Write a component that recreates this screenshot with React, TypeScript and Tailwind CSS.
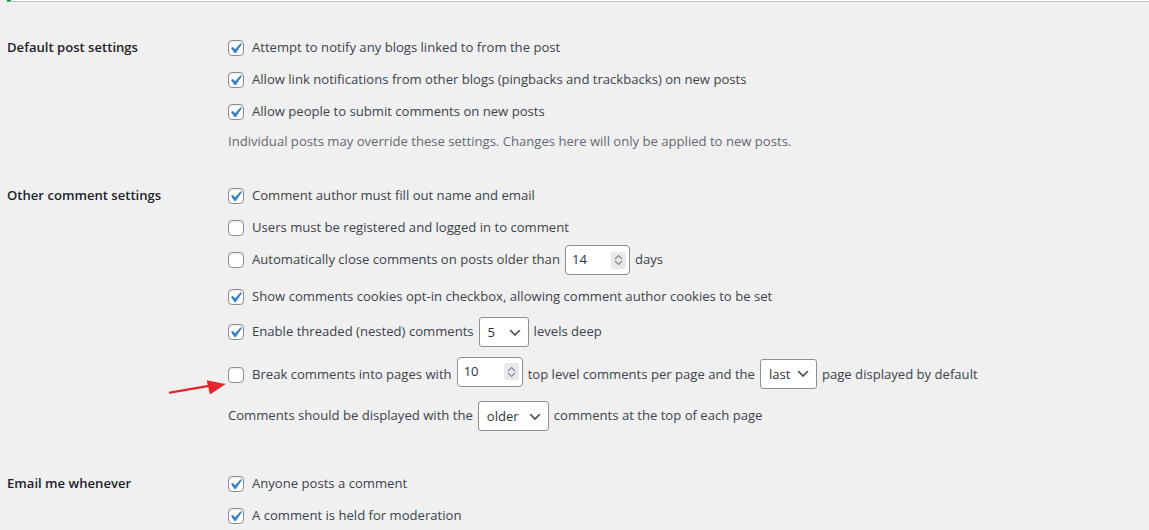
import type { ReactNode } from "react";

const font = { fontFamily: '"Open Sans", "Noto Sans", sans-serif' };

function Check({ on }: { on?: boolean }) {
  return (
    <span className="relative inline-block w-4 h-4 shrink-0 rounded-[4px] border border-[#8c8f94] bg-white shadow-[inset_0_1px_2px_rgba(0,0,0,0.1)]">
      {on && (
        <svg
          className="absolute -top-[3px] -left-[4px] w-[21px] h-[21px]"
          viewBox="0 0 20 20"
        >
          <path
            d="M14.83 4.89l1.34.94-5.81 8.38H9.02L5.78 9.67l1.34-1.25 2.57 2.4z"
            fill="#3582c4"
          />
        </svg>
      )}
    </span>
  );
}

function NumberBox({ value, w, className = "" }: { value: string; w: string; className?: string }) {
  return (
    <span
      className={`flex items-center h-[30px] ${w} ${className} shrink-0 rounded-[4px] border border-[#8c8f94] bg-white pl-[6px] pr-[3px] text-[#2c3338]`}
    >
      <span className="flex-1">{value}</span>
      <span className="flex flex-col items-center justify-center w-[15px] h-[17px] bg-[#e9e9ed] rounded-[2px]">
        <svg width="9" height="6" viewBox="0 0 9 6">
          <path d="M1 5l3.5-3.5L8 5" stroke="#8a8a8a" strokeWidth="1.2" fill="none" />
        </svg>
        <svg width="9" height="6" viewBox="0 0 9 6">
          <path d="M1 1l3.5 3.5L8 1" stroke="#8a8a8a" strokeWidth="1.2" fill="none" />
        </svg>
      </span>
    </span>
  );
}

function Select({ value, w, className = "" }: { value: string; w: string; className?: string }) {
  return (
    <span
      className={`flex items-center h-[30px] ${w} ${className} shrink-0 rounded-[3px] border border-[#8c8f94] bg-white pl-[8px] pr-[5px] text-[#2c3338]`}
    >
      <span className="flex-1 pt-[2px]">{value}</span>
      <svg width="16" height="16" viewBox="0 0 20 20" className="mt-[1px]">
        <path d="M5 6l5 5 5-5 2 1-7 7-7-7 2-1z" fill="#555" />
      </svg>
    </span>
  );
}

function Row({ h, children }: { h: string; children: ReactNode }) {
  return <div className={`flex items-center gap-[5px] ${h}`}>{children}</div>;
}

function Option({ on, h = "h-[32px]", children }: { on?: boolean; h?: string; children: ReactNode }) {
  return (
    <Row h={h}>
      <Check on={on} />
      <span className="ml-[3px] flex items-center gap-[5px]">{children}</span>
    </Row>
  );
}

function Section({ label, children, className = "" }: { label: string; children: ReactNode; className?: string }) {
  return (
    <div className={`flex ${className}`}>
      <div className="w-[221px] shrink-0 h-[32px] flex items-center font-semibold text-[#1d2327]">
        {label}
      </div>
      <div className="flex flex-col">{children}</div>
    </div>
  );
}

export default function App() {
  return (
    <div
      style={font}
      className="relative min-h-[530px] bg-[#f0f0f1] pl-[7px] text-[13.1px] text-[#3c434a] overflow-hidden"
    >
      {/* notice box edge */}
      <div className="h-[2px] bg-white border-l-4 border-[#00a32a] border-b border-b-[#c3c4c7]" />

      <Section label="Default post settings" className="mt-[30px]">
        <Option on>Attempt to notify any blogs linked to from the post</Option>
        <Option on>Allow link notifications from other blogs (pingbacks and trackbacks) on new posts</Option>
        <Option on h="h-[31px]">Allow people to submit comments on new posts</Option>
        <div className="h-[30px] flex items-center text-[#646970]">
          Individual posts may override these settings. Changes here will only be applied to new posts.
        </div>
      </Section>

      <Section label="Other comment settings" className="mt-[23px]">
        <Option on>Comment author must fill out name and email</Option>
        <Option>Users must be registered and logged in to comment</Option>
        <Option>
          <span>Automatically close comments on posts older than</span>
          <NumberBox value="14" w="w-[65px]" />
          <span>days</span>
        </Option>
        <Option on h="h-[41px]">Show comments cookies opt-in checkbox, allowing comment author cookies to be set</Option>
        <Option on h="h-[30px]">
          <span>Enable threaded (nested) comments</span>
          <Select value="5" w="w-[50px]" />
          <span>levels deep</span>
        </Option>
        <div className="pt-[2px]">
          <Option h="h-[52px]">
            <span>Break comments into pages with</span>
            <NumberBox value="10" w="w-[66px]" className="mb-[7px]" />
            <span>top level comments per page and the</span>
            <Select value="last" w="w-[57px]" className="mb-[3px]" />
            <span>page displayed by default</span>
          </Option>
        </div>
        <Row h="h-[30px]">
          <span>Comments should be displayed with the</span>
          <Select value="older" w="w-[71px]" />
          <span>comments at the top of each page</span>
        </Row>
      </Section>

      <Section label="Email me whenever" className="mt-[37px]">
        <Option on>Anyone posts a comment</Option>
        <Option on>A comment is held for moderation</Option>
      </Section>

      {/* annotation arrow */}
      <svg
        className="absolute left-[165px] top-[375px] w-[65px] h-[25px]"
        viewBox="0 0 65 25"
      >
        <path d="M5 17.7L44 10.8" stroke="#e5242b" strokeWidth="2.2" strokeLinecap="round" />
        <path d="M41.7 5.2L60.7 9L45 19.6z" fill="#e5242b" />
      </svg>
    </div>
  );
}
